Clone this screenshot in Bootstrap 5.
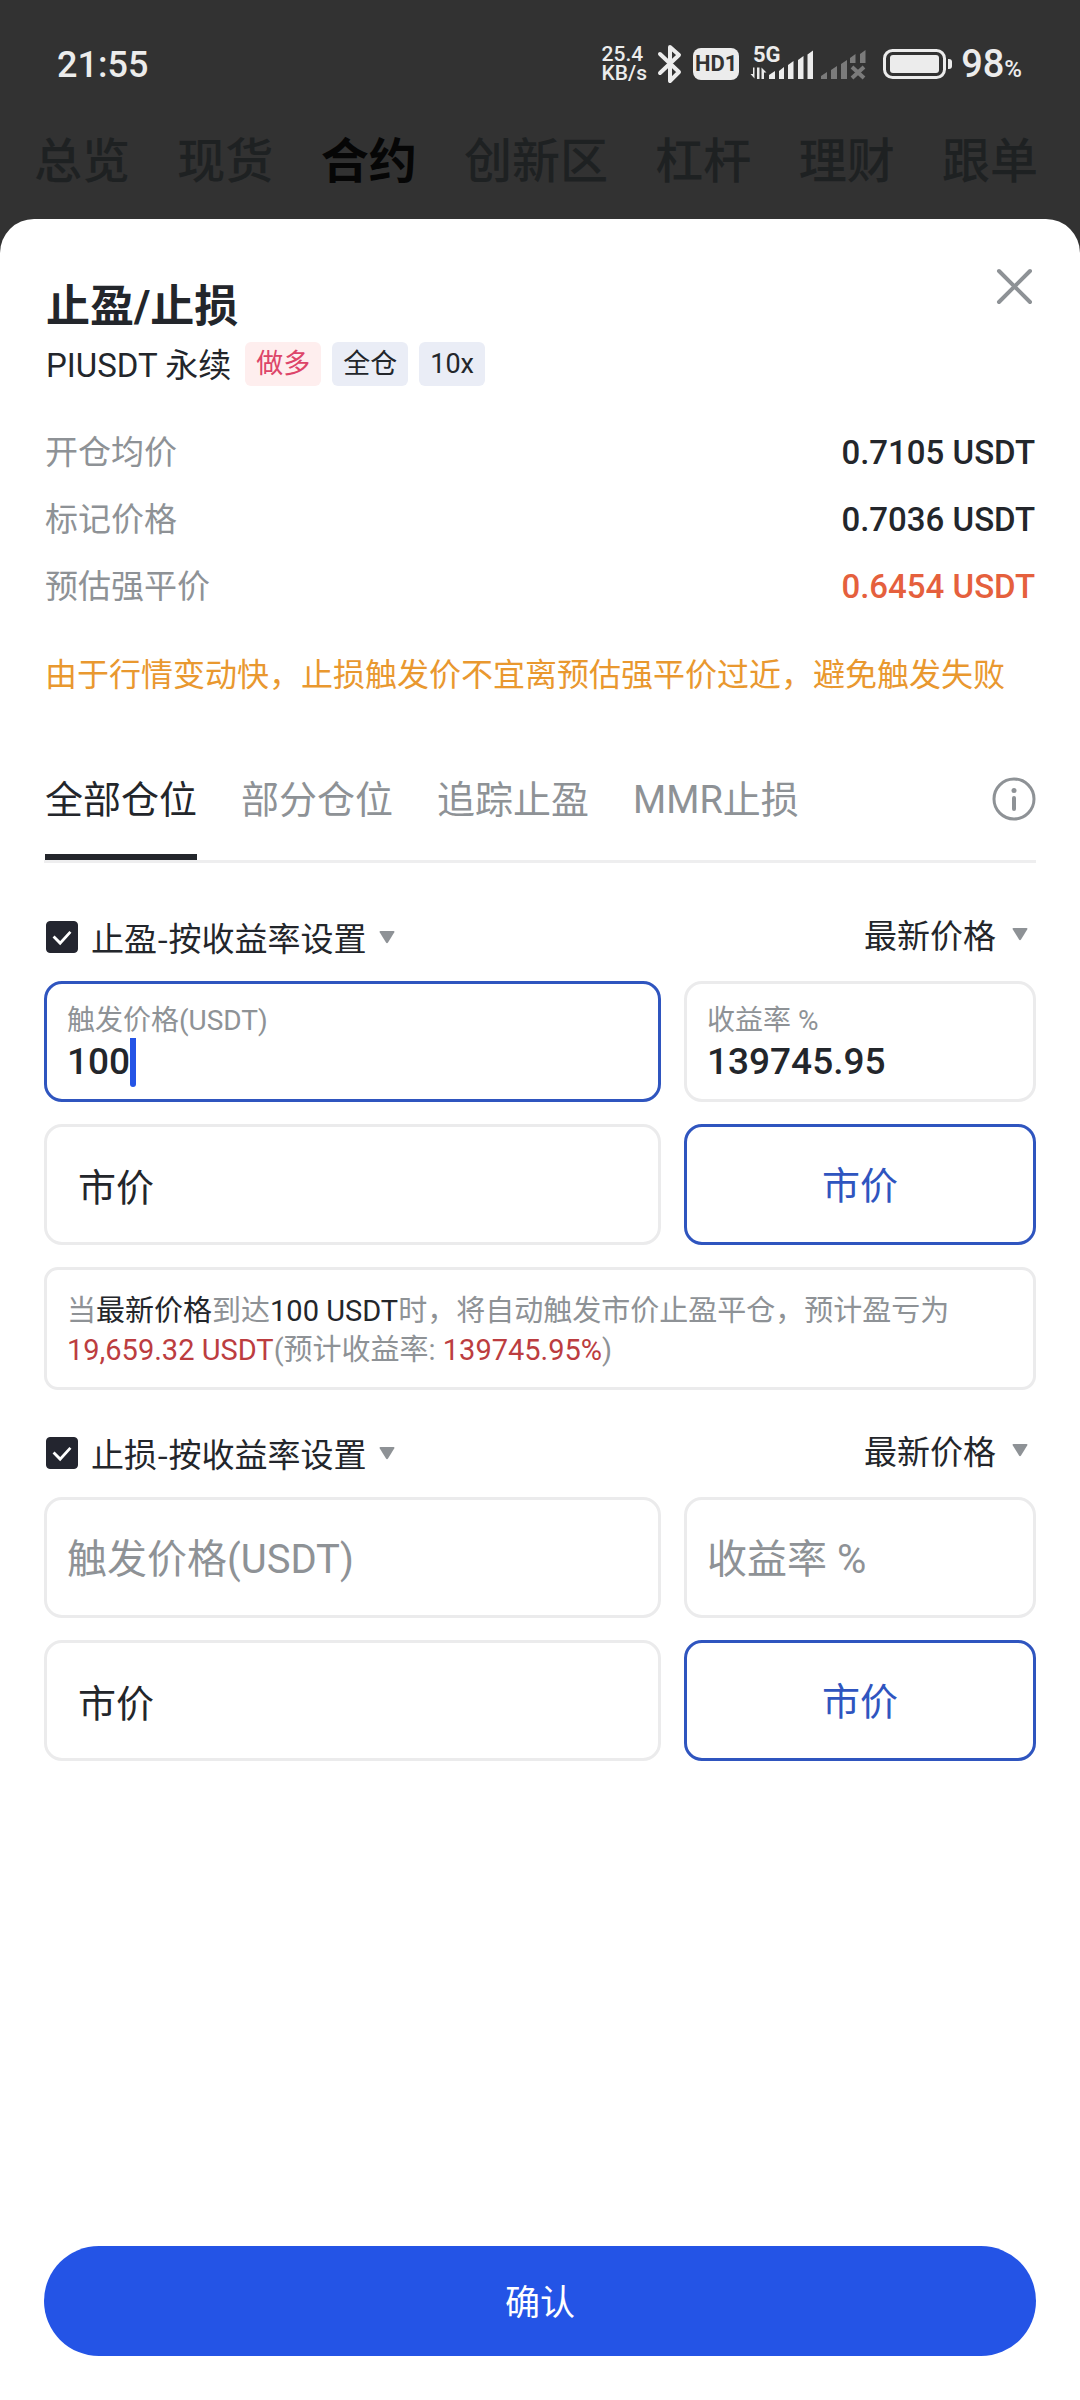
<!DOCTYPE html>
<html lang="zh-CN">
<head>
<meta charset="utf-8">
<meta name="viewport" content="width=device-width, initial-scale=1">
<title>止盈/止损</title>
<link href="https://cdn.jsdelivr.net/npm/bootstrap@5.3.0/dist/css/bootstrap.min.css" rel="stylesheet">
<style>
  :root { --ink: #23262b; --muted: #8e9296; --line: #ebebec; --brand: #2454e6; --outline: #2f55bf; }
  body { font-family: Roboto, "Noto Sans CJK SC", sans-serif; background: #323232; color: var(--ink); font-size: 33px; line-height: 48px; }
  svg { display: block; flex: none; }

  /* status bar */
  .status-bar { height: 128px; padding: 0 58px 0 57px; color: #ececec; }
  .clock { font-size: 36px; font-weight: 500; padding-top: 2px; }
  .net-speed { font-size: 21px; line-height: 19px; font-weight: 500; }
  .hd-tag { background: #ececec; color: #323232; border-radius: 8px; width: 46px; height: 32px; font-size: 22px; line-height: 32px; font-weight: 700; }
  .charge { font-size: 38px; font-weight: 500; padding-top: 4px; }
  .charge span { font-size: 24px; }

  /* account sections */
  .top-nav { padding: 1px 42px 0 34px; height: 91px; font-size: 48px; line-height: 66px; font-weight: 500; }
  .top-nav a { color: #1e2122; text-decoration: none; }
  .top-nav a.active { color: #060606; font-weight: 700; }

  /* sheet */
  .sheet { background: #fff; border-radius: 34px 34px 0 0; padding: 60px 44px 44px; }
  .sheet-title { font-size: 44px; line-height: 52px; font-weight: 700; margin: 0; padding: 2px 0 9px 2px; }
  .close-btn { width: 44px; height: 44px; margin-right: -1px; margin-top: -14px; }
  .pair { line-height: 44px; padding-left: 2px; }
  .pair-name { padding-top: 2px; }
  .tag { font-size: 27px; line-height: 44px; border-radius: 6px; padding: 0 11px; background: #eaedf6; margin-left: 11px; }
  .tag-long { background: #feeeee; color: #dd4569; margin-left: 14px; }

  .stats { margin: 31px 1px 0; line-height: 67px; }
  .stats dt { font-weight: 400; color: var(--muted); }
  .stats dd { margin: 0; font-weight: 500; }
  .stats .danger { color: #e5603d; }
  .note { font-size: 32px; color: #e9982f; margin: 31px 0 73px; padding-left: 1px; white-space: nowrap; }

  .mode-tabs { border-bottom: 3px solid #eeeeef; font-size: 38px; line-height: 56px; gap: 44px; padding-left: 1px; }
  .mode-tabs button { background: none; border: 0; border-bottom: 6px solid transparent; color: var(--muted); padding: 0 0 26px; }
  .mode-tabs button.active { color: var(--ink); border-bottom-color: var(--ink); }
  .mode-tabs .info-btn { border: 0; padding: 5px 0 0; }

  .order-head { margin: 50px 0 20px; }
  .order-head.second { margin-top: 39px; }
  .order-head select { appearance: none; background: none; border: 0; padding: 0; color: var(--ink); line-height: 48px; font-family: "Noto Sans CJK SC", sans-serif; }
  .order-head .rule svg { margin-left: 10px; }
  .order-head .price-type { padding-right: 6px; }
  .order-head .price-type select { line-height: 42px; }
  .order-head .price-type svg { margin-left: 14px; }
  .order-head .form-check-input { width: 32px; height: 32px; margin: 0 13px 0 2px; border-radius: 4px; flex: none; }
  .order-head .form-check-input:checked { background-color: #23252f; border-color: #23252f;
    background-image: url("data:image/svg+xml,%3Csvg xmlns='http://www.w3.org/2000/svg' viewBox='0 0 32 32'%3E%3Cpath d='M7 15.500l7 7L25 10.500' fill='none' stroke='%23fff' stroke-width='3'/%3E%3C/svg%3E"); background-size: 100%; }

  .fields { display: grid; grid-template-columns: 617fr 352fr; gap: 22px 23px; }
  .box { border: 3px solid var(--line); border-radius: 18px; height: 121px; min-width: 0; width: 100%; padding: 3px 20px 0; font-size: 40px; background: #fff; color: var(--ink); }
  .box::placeholder { color: var(--muted); opacity: 1; }
  .box.market { padding: 0 31px; font-size: 38px; }
  .box.picked { border-color: var(--outline); }
  button.box { color: var(--outline); font-size: 38px; }
  .box.filled { padding-top: 20px; font-size: 28px; line-height: 34px; color: var(--muted); }
  .filled input { border: 0; padding: 0; outline: 0; width: 100%; font-size: 37px; line-height: 48px; height: 48px; font-weight: 500; color: var(--ink); background: none; }
  .filled input.typed { width: 3ch; }
  .caret { width: 6px; height: 49px; background: var(--brand); border-radius: 0 0 3px 3px; }

  .forecast { border: 3px solid var(--line); border-radius: 14px; margin: 22px 0 0; padding: 22px 20px 17px; font-size: 29px; line-height: 39px; color: var(--muted); }
  .forecast b { font-weight: 400; color: var(--ink); }
  .forecast em { font-style: normal; color: #bc3d40; }

  .confirm { height: 110px; border-radius: 55px; background: var(--brand); color: #fff; border: 0; font-size: 35px; padding: 5px 0 0; }
</style>
</head>
<body class="d-flex flex-column min-vh-100">

<header>
  <div class="status-bar d-flex align-items-center justify-content-between">
    <div class="clock">21:55</div>
    <div class="d-flex align-items-center">
      <div class="net-speed">25.4<br>KB/s</div>
      <svg class="ms-2 me-2" width="30" height="42" viewBox="0 0 30 42" fill="none" stroke="#ececec" stroke-width="4" stroke-linejoin="round" stroke-linecap="round"><path d="M5 11l19 18-9 9V4l9 8L5 30"/></svg>
      <div class="hd-tag text-center">HD1</div>
      <svg class="ms-2" width="120" height="48" viewBox="747 40 120 48" fill="#ececec">
        <text x="753" y="62" font-family="Roboto" font-size="22" font-weight="700">5G</text>
        <path d="M754.500 67.500v11l-4-4.500h2.500v-6.500zM757 67.500h2.500v11.500H757zM761.500 79V67.500l5 5h-2.500V79z"/>
        <path d="M769 79v-4l6-4v8zM779 79v-8l5-4v12zM788 79V65l5.500-4v18zM798 79V60l5.500-4v23zM807.500 79V54.500l5.500-4V79z"/>
        <g fill="#7b7b7b"><path d="M821 79v-3l6-4v7zM831 79v-9l6-4v13zM841 79V64l6-4v19zM850 63v-5l5.500-4v9zM860 63V54l5.500-4v13z"/><path d="M852 67l12 11M864 67l-12 11" stroke="#7b7b7b" stroke-width="4"/></g>
      </svg>
      <svg class="ms-3 me-2" width="70" height="32" viewBox="0 0 70 32"><rect x="1.500" y="2.500" width="60" height="27" rx="8" fill="none" stroke="#ececec" stroke-width="3"/><rect x="7" y="7" width="49" height="18" rx="3" fill="#ececec"/><path d="M65 11h1q3 0 3 3v4q0 3-3 3h-1z" fill="#ececec"/></svg>
      <div class="charge">98<span>%</span></div>
    </div>
  </div>
  <nav class="top-nav d-flex justify-content-between">
    <a href="#">总览</a>
    <a href="#">现货</a>
    <a href="#" class="active" aria-current="page">合约</a>
    <a href="#">创新区</a>
    <a href="#">杠杆</a>
    <a href="#">理财</a>
    <a href="#">跟单</a>
  </nav>
</header>

<main class="sheet flex-grow-1 d-flex flex-column">
  <div class="d-flex justify-content-between align-items-start">
    <h1 class="sheet-title">止盈/止损</h1>
    <button type="button" class="close-btn bg-transparent border-0 p-0" aria-label="关闭">
      <svg width="44" height="44" viewBox="0 0 44 44" stroke="#8e9296" stroke-width="4" stroke-linecap="round"><path d="M6 6l31 31M37 6L6 37"/></svg>
    </button>
  </div>
  <div class="pair d-flex align-items-start">
    <span class="pair-name">PIUSDT 永续</span>
    <span class="tag tag-long">做多</span>
    <span class="tag">全仓</span>
    <span class="tag">10x</span>
  </div>

  <dl class="stats">
    <div class="d-flex justify-content-between"><dt>开仓均价</dt><dd>0.7105 USDT</dd></div>
    <div class="d-flex justify-content-between"><dt>标记价格</dt><dd>0.7036 USDT</dd></div>
    <div class="d-flex justify-content-between"><dt>预估强平价</dt><dd class="danger">0.6454 USDT</dd></div>
  </dl>
  <p class="note">由于行情变动快，止损触发价不宜离预估强平价过近，避免触发失败</p>

  <div class="mode-tabs d-flex align-items-start" role="tablist">
    <button type="button" role="tab" class="active" aria-selected="true">全部仓位</button>
    <button type="button" role="tab" aria-selected="false">部分仓位</button>
    <button type="button" role="tab" aria-selected="false">追踪止盈</button>
    <button type="button" role="tab" aria-selected="false">MMR止损</button>
    <button type="button" class="info-btn ms-auto" aria-label="说明">
      <svg width="44" height="44" viewBox="0 0 44 44" fill="none" stroke="#8e9296" stroke-width="4" stroke-linecap="round"><circle cx="22" cy="22" r="20" stroke-width="3"/><path d="M22 21v11"/><circle cx="22" cy="13.500" r="2.500" fill="#8e9296" stroke="none"/></svg>
    </button>
  </div>

  <div class="order-head d-flex justify-content-between align-items-start">
    <div class="rule d-flex align-items-center">
      <input class="form-check-input" type="checkbox" aria-label="启用止盈" checked>
      <select aria-label="止盈设置方式"><option>止盈-按收益率设置</option></select>
      <svg width="20" height="16" viewBox="0 0 20 16" fill="#8e9296"><path d="M3.500 2h13q1.500 0 .7 1.400l-6.200 10q-1 1.500-2 0l-6.200-10Q2 2 3.500 2z"/></svg>
    </div>
    <div class="price-type d-flex align-items-center">
      <select aria-label="止盈价格类型"><option>最新价格</option></select>
      <svg width="20" height="16" viewBox="0 0 20 16" fill="#8e9296"><path d="M3.500 2h13q1.500 0 .7 1.400l-6.200 10q-1 1.500-2 0l-6.200-10Q2 2 3.500 2z"/></svg>
    </div>
  </div>
  <div class="fields">
    <label class="box filled picked">触发价格(USDT)
      <span class="d-flex"><input class="typed" type="text" inputmode="decimal" value="100"><span class="caret"></span></span>
    </label>
    <label class="box filled">收益率 %
      <span class="d-flex"><input type="text" inputmode="decimal" value="139745.95"></span>
    </label>
    <input class="box market" type="text" value="市价" aria-label="止盈委托价格" readonly>
    <button type="button" class="box picked">市价</button>
  </div>
  <p class="forecast">当<b>最新价格</b>到达<b>100 USDT</b>时，将自动触发市价止盈平仓，预计盈亏为<br><em>19,659.32 USDT</em>(预计收益率: <em>139745.95%</em>)</p>

  <div class="order-head second d-flex justify-content-between align-items-start">
    <div class="rule d-flex align-items-center">
      <input class="form-check-input" type="checkbox" aria-label="启用止损" checked>
      <select aria-label="止损设置方式"><option>止损-按收益率设置</option></select>
      <svg width="20" height="16" viewBox="0 0 20 16" fill="#8e9296"><path d="M3.500 2h13q1.500 0 .7 1.400l-6.200 10q-1 1.500-2 0l-6.200-10Q2 2 3.500 2z"/></svg>
    </div>
    <div class="price-type d-flex align-items-center">
      <select aria-label="止损价格类型"><option>最新价格</option></select>
      <svg width="20" height="16" viewBox="0 0 20 16" fill="#8e9296"><path d="M3.500 2h13q1.500 0 .7 1.400l-6.200 10q-1 1.500-2 0l-6.200-10Q2 2 3.500 2z"/></svg>
    </div>
  </div>
  <div class="fields">
    <input class="box" type="text" inputmode="decimal" placeholder="触发价格(USDT)" aria-label="触发价格(USDT)">
    <input class="box" type="text" inputmode="decimal" placeholder="收益率 %" aria-label="收益率 %">
    <input class="box market" type="text" value="市价" aria-label="止损委托价格" readonly>
    <button type="button" class="box picked">市价</button>
  </div>

  <button type="button" class="confirm w-100 mt-auto">确认</button>
</main>

<script src="https://cdn.jsdelivr.net/npm/bootstrap@5.3.0/dist/js/bootstrap.bundle.min.js"></script>
</body>
</html>
